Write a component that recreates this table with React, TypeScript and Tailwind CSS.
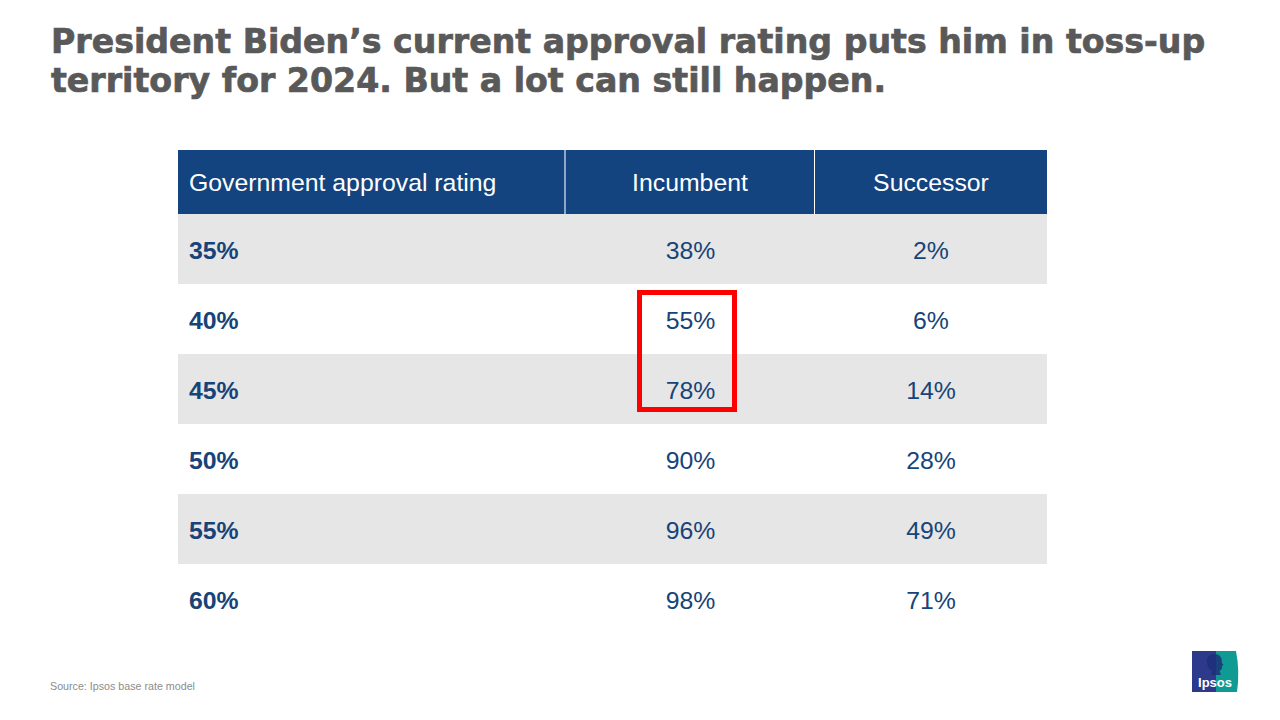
const rows = [
  { rating: "35%", incumbent: "38%", successor: "2%" },
  { rating: "40%", incumbent: "55%", successor: "6%" },
  { rating: "45%", incumbent: "78%", successor: "14%" },
  { rating: "50%", incumbent: "90%", successor: "28%" },
  { rating: "55%", incumbent: "96%", successor: "49%" },
  { rating: "60%", incumbent: "98%", successor: "71%" },
];

function IpsosLogo() {
  return (
    <svg width="48" height="41" viewBox="0 0 48 41">
      <path d="M0 0 H24 V41 H0 Z" fill="#2d3a8c" />
      <path d="M24 0 H44 Q48 20 45 41 H24 Z" fill="#0f9b94" />
      <path
        d="M22.5 3 C16.5 3 14 8 15 12.5 C15.5 16 17.5 18.5 20 19.5 L19 24 H29 L27.5 20 C29.5 19 30.5 17 30 15 L31.5 13.5 L29.8 12 C30.5 7 28 3 22.5 3 Z"
        fill="#1f2f7a"
        opacity="0.85"
      />
      <text
        x="23"
        y="36"
        textAnchor="middle"
        fill="#ffffff"
        fontSize="13"
        fontWeight="700"
        fontFamily="'Liberation Sans', Arial, sans-serif"
      >
        Ipsos
      </text>
    </svg>
  );
}

export default function App() {
  return (
    <div
      className="w-[1280px] h-[720px] bg-white flex flex-col relative overflow-hidden"
      style={{ fontFamily: "'Liberation Sans', Arial, sans-serif" }}
    >
      {/* Title */}
      <h1
        className="pl-[51px] pt-[22px] text-[33.2px] leading-[39px] font-bold text-[#595959] [-webkit-text-stroke:0.7px_#595959]"
        style={{ fontFamily: "'DejaVu Sans', 'Liberation Sans', sans-serif" }}
      >
        President Biden’s current approval rating puts him in toss-up
        <br />
        territory for 2024. But a lot can still happen.
      </h1>

      {/* Table */}
      <div className="ml-[178px] mt-[50px] w-[869px] relative">
        <div className="flex h-[64px] bg-[#134480] text-white text-[24.8px]">
          <div className="w-[388px] flex items-center pl-[11px] pt-[2px] border-r-2 border-[#8fa6c6]">
            Government approval rating
          </div>
          <div className="w-[249px] flex items-center justify-center pt-[2px] border-r border-white">
            Incumbent
          </div>
          <div className="flex-1 flex items-center justify-center pt-[2px]">Successor</div>
        </div>
        {rows.map((r, i) => (
          <div
            key={r.rating}
            className={`flex h-[70px] pt-[3px] text-[24.8px] text-[#164478] ${
              i % 2 === 0 ? "bg-[#e6e6e6]" : "bg-white"
            }`}
          >
            <div className="w-[388px] flex items-center pl-[11px] font-bold">{r.rating}</div>
            <div className="w-[249px] flex items-center justify-center">{r.incumbent}</div>
            <div className="flex-1 flex items-center justify-center">{r.successor}</div>
          </div>
        ))}

        {/* Highlight box */}
        <div className="absolute left-[459px] top-[140px] w-[100px] h-[122px] border-[5px] border-[#ff0000]" />
      </div>

      {/* Footer */}
      <div className="mt-auto flex items-end justify-between pl-[50px] pr-[40px] pb-[28px]">
        <span className="text-[10.7px] text-[#8c8c8c] mb-[-2px]">Source: Ipsos base rate model</span>
        <IpsosLogo />
      </div>
    </div>
  );
}
